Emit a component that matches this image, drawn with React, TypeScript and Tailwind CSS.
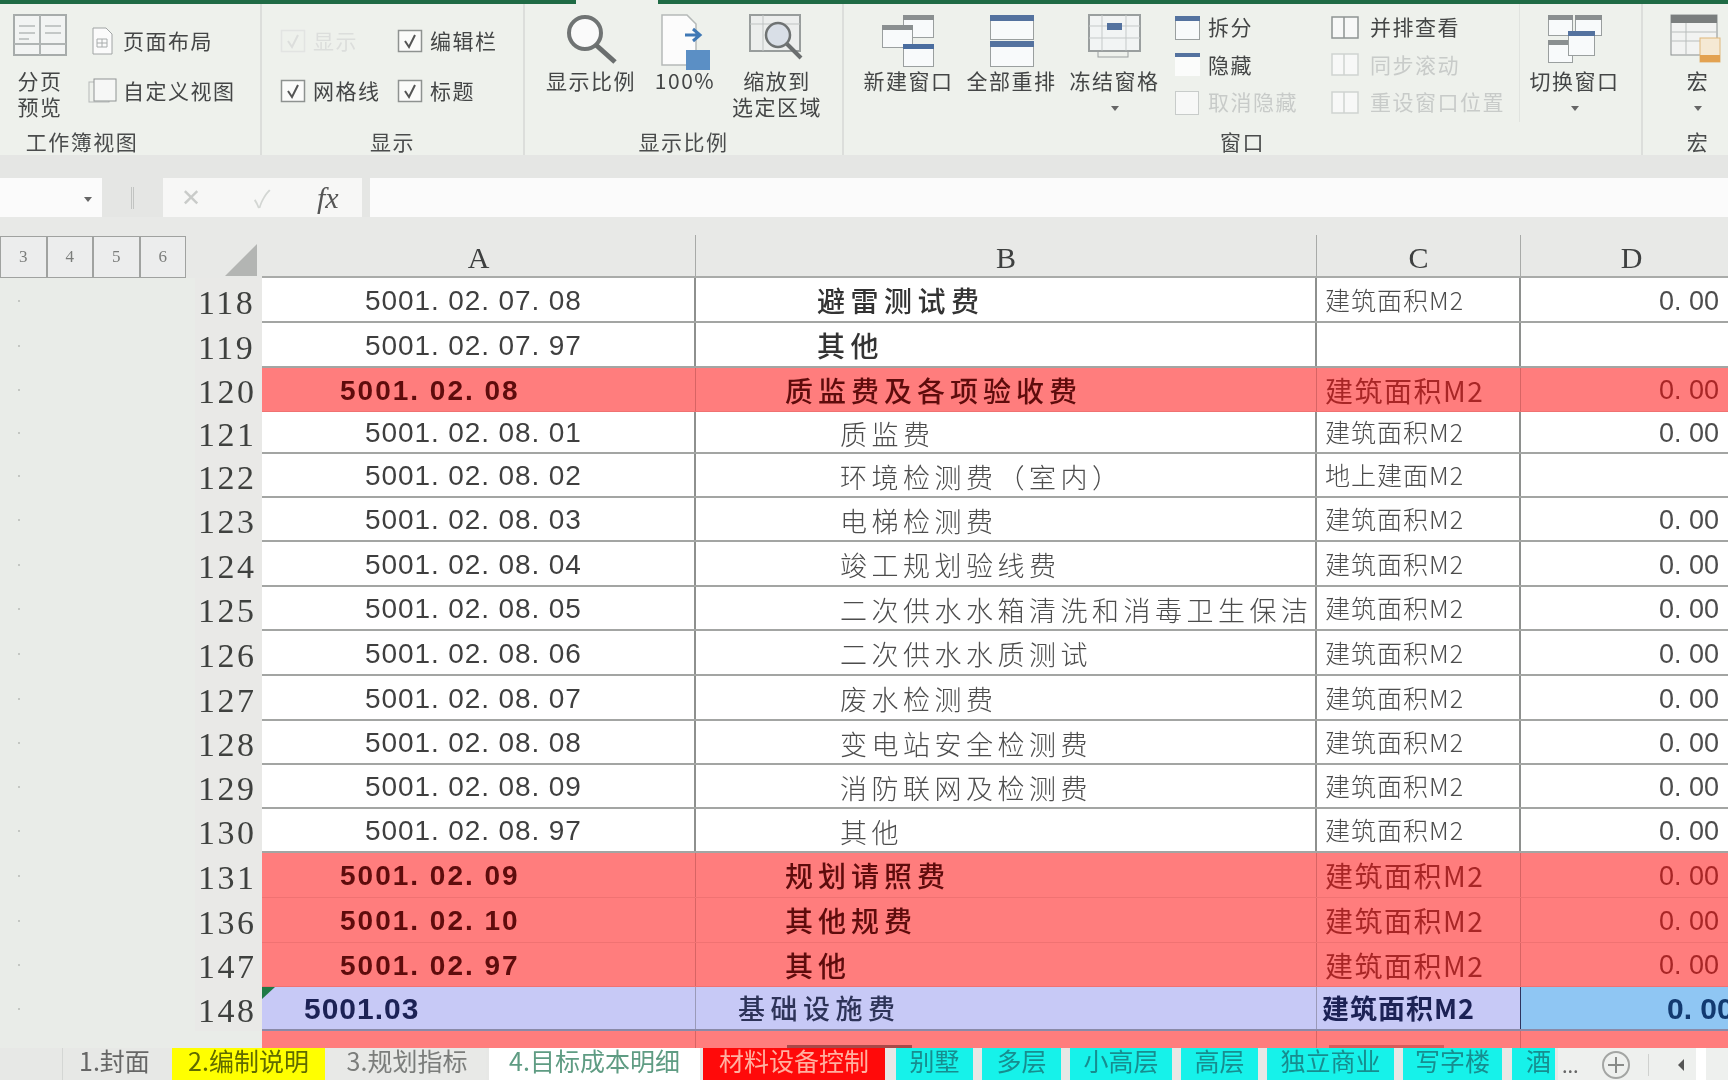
import React from "react";

const Win = ({ x, y, w, h, head = "#7f8c9c", headH = 5, fill = "#f8fafb" }: { x: number; y: number; w: number; h: number; head?: string; headH?: number; fill?: string }) => (
  <g>
    <rect x={x + 0.5} y={y + 0.5} width={w} height={h} fill={fill} stroke="#9a9f9f" />
    <rect x={x} y={y} width={w + 1} height={headH} fill={head} />
  </g>
);

const PageBreakIcon = () => (
  <svg width="54" height="42" viewBox="0 0 54 42">
    <rect x="1" y="1" width="52" height="40" fill="#f2f4f3" stroke="#a7acab" strokeWidth="2" />
    <path d="M27 1v40M1 30h52" stroke="#b0b5b4" strokeWidth="2" />
    <path d="M6 12h16M6 19h16M6 25h10M32 12h16M32 19h16" stroke="#c4c8c7" strokeWidth="2" />
  </svg>
);
const PageIcon = () => (
  <svg width="24" height="28" viewBox="0 0 24 28">
    <path d="M3 1h13l6 6v20H3z" fill="#fbfbfb" stroke="#a0a4a4" />
    <path d="M7 12h10v8H7zM12 12v8M7 16h10" fill="none" stroke="#a8acac" />
  </svg>
);
const CustomViewIcon = () => (
  <svg width="30" height="26" viewBox="0 0 30 26">
    <rect x="1" y="4" width="20" height="20" fill="none" stroke="#b5b9b8" />
    <rect x="6" y="1" width="22" height="22" fill="#f6f7f6" stroke="#8f9493" />
  </svg>
);
const Check = ({ off = false }: { off?: boolean }) => (
  <svg width="26" height="24" viewBox="0 0 26 24" className="shrink-0">
    <rect x="1.5" y="1.5" width="23" height="21" fill={off ? "none" : "#fbfbfa"} stroke={off ? "#e2e4e2" : "#8e9290"} strokeWidth="1.5" />
    <path d="M8 12l4 6 6-12" fill="none" stroke={off ? "#dcdedc" : "#555"} strokeWidth="2" />
  </svg>
);
const MagnifierIcon = () => (
  <svg width="54" height="50" viewBox="0 0 54 50">
    <circle cx="21" cy="19" r="16" fill="#fafafa" stroke="#707474" strokeWidth="4" />
    <path d="M32 31l19 17" stroke="#6a6e6e" strokeWidth="5" />
  </svg>
);
const HundredIcon = () => (
  <svg width="50" height="56" viewBox="0 0 50 56">
    <path d="M2 1h25l9 9v41H2z" fill="#fcfcfc" stroke="#b5b9b8" strokeWidth="1.5" />
    <path d="M25 21h14M33 15l7 6-7 6" fill="none" stroke="#3f78b5" strokeWidth="3" />
    <rect x="26" y="36" width="24" height="20" fill="#5b8fc5" />
  </svg>
);
const ZoomSelIcon = () => (
  <svg width="56" height="46" viewBox="0 0 56 46">
    <rect x="1" y="1" width="50" height="36" fill="#eceeed" stroke="#989d9c" strokeWidth="2" />
    <path d="M1 10h50M14 1v36" stroke="#bfc3c2" />
    <circle cx="29" cy="21" r="12" fill="#d9dfe7" stroke="#6f7373" strokeWidth="2.5" />
    <path d="M38 30l14 14" stroke="#6a6e6e" strokeWidth="4" />
  </svg>
);
const NewWinIcon = () => (
  <svg width="56" height="54" viewBox="0 0 56 54">
    <Win x={22} y={1} w={30} h={22} head="#8a8f90" />
    <Win x={1} y={11} w={30} h={22} head="#8a8f90" />
    <Win x={22} y={30} w={30} h={22} head="#4a6d9f" />
  </svg>
);
const ArrangeIcon = () => (
  <svg width="46" height="54" viewBox="0 0 46 54">
    <Win x={1} y={1} w={43} h={24} head="#54729f" headH={6} />
    <Win x={1} y={27} w={43} h={25} head="#54729f" headH={6} />
  </svg>
);
const FreezeIcon = () => (
  <svg width="54" height="44" viewBox="0 0 54 44">
    <rect x="1" y="1" width="51" height="36" fill="#f2f4f4" stroke="#9a9f9f" strokeWidth="2" />
    <path d="M1 12h51M1 24h51M14 1v36M38 1v36" stroke="#c5c9c9" />
    <rect x="19" y="9" width="15" height="7" fill="#54729f" />
    <rect x="10" y="37" width="30" height="6" fill="none" stroke="#9a9f9f" />
  </svg>
);
const SmallWin = ({ mode }: { mode: "split" | "hide" | "off" }) => (
  <svg width="27" height="26" viewBox="0 0 27 26" className="shrink-0">
    {mode === "split" && <Win x={1} y={1} w={24} h={23} head="#54729f" headH={5} />}
    {mode === "hide" && (
      <g>
        <rect x="1" y="1" width="25" height="23" fill="#fbfcfb" />
        <rect x="1" y="1" width="25" height="4" fill="#54729f" />
      </g>
    )}
    {mode === "off" && <rect x="1.5" y="1.5" width="23" height="23" fill="#f7f8f7" stroke="#c8ccca" />}
  </svg>
);
const SideBySideIcon = ({ off = false }: { off?: boolean }) => (
  <svg width="34" height="26" viewBox="0 0 34 26" className="shrink-0">
    <path d="M3 2h12v21H3zM15 2h14v21H15z" fill="#f7f8f7" stroke={off ? "#d0d3d1" : "#8f9493"} strokeWidth="1.5" />
  </svg>
);
const SwitchIcon = () => (
  <svg width="56" height="50" viewBox="0 0 56 50">
    <Win x={1} y={1} w={24} h={20} head="#8a8f90" />
    <Win x={28} y={1} w={26} h={20} head="#8a8f90" />
    <Win x={1} y={26} w={24} h={22} head="#8a8f90" />
    <Win x={21} y={17} w={26} h={24} head="#54729f" />
  </svg>
);
const MacroIcon = () => (
  <svg width="56" height="50" viewBox="0 0 56 50">
    <rect x="1" y="1" width="46" height="40" fill="#f2f3f2" stroke="#8a8f8f" />
    <rect x="1" y="1" width="46" height="8" fill="#7a7e7e" />
    <path d="M1 18h46M1 27h46M16 9v32" stroke="#b9bdbc" />
    <rect x="30" y="24" width="20" height="24" fill="#f5e9d4" stroke="#e0b77a" />
    <rect x="30" y="41" width="20" height="7" fill="#e3a251" />
  </svg>
);
const Caret = () => <div className="mt-[4px] h-0 w-0 border-x-[4px] border-t-[5px] border-x-transparent border-t-[#666]" />;

const BigBtn = ({ icon, lines, caret = false, w = "w-[89px]" }: { icon: React.ReactNode; lines: string[]; caret?: boolean; w?: string }) => (
  <div className={`flex shrink-0 flex-col items-center pt-[9px] ${w}`}>
    <div className="flex h-[54px] items-start justify-center pt-[1px]">{icon}</div>
    {lines.map((l) => (
      <div key={l} className="whitespace-nowrap text-[21px] leading-[26px] tracking-[1.5px] text-[#444646]">{l}</div>
    ))}
    {caret && (
      <div className="flex h-[26px] items-center">
        <Caret />
      </div>
    )}
  </div>
);
const Small = ({ icon, text, off = false }: { icon: React.ReactNode; text: string; off?: boolean }) => (
  <div className="flex h-[37.5px] items-center gap-[7px]">
    {icon}
    <span className={`-mt-[2px] whitespace-nowrap text-[21px] tracking-[1.5px] ${off ? "text-[#c8cbc9]" : "text-[#444646]"}`}>{text}</span>
  </div>
);
const Label = ({ children, extra = "" }: { children: string; extra?: string }) => (
  <div className={`mb-[1px] h-[26px] text-center text-[21px] leading-[26px] tracking-[1.5px] text-[#4a4c4c] ${extra}`}>{children}</div>
);

const CheckItem = ({ text, off = false }: { text: string; off?: boolean }) => (
  <div className="flex h-[50px] items-center gap-[7px]">
    <Check off={off} />
    <span className={`whitespace-nowrap text-[21px] tracking-[1.5px] ${off ? "text-[#dcdedc]" : "text-[#444646]"}`}>{text}</span>
  </div>
);

const Ribbon = () => (
  <div className="flex h-[151px] shrink-0 bg-[#eef1ec]">
    <div className="flex w-[262px] shrink-0 flex-col justify-between border-r-2 border-[#dcdedb]">
      <div className="flex">
        <BigBtn w="w-[80px]" lines={["分页", "预览"]} icon={<PageBreakIcon />} />
        <div className="flex flex-col pl-[8px] pt-[12px]">
          <div className="flex h-[50px] items-center gap-[9px] pl-[2px]">
            <PageIcon />
            <span className="text-[21px] tracking-[1.5px] text-[#444646]">页面布局</span>
          </div>
          <div className="flex h-[50px] items-center gap-[5px]">
            <CustomViewIcon />
            <span className="whitespace-nowrap text-[21px] tracking-[1.5px] text-[#444646]">自定义视图</span>
          </div>
        </div>
      </div>
      <Label extra="pr-[96px]">工作簿视图</Label>
    </div>
    <div className="flex w-[263px] shrink-0 flex-col justify-between border-r-2 border-[#dcdedb]">
      <div className="grid grid-cols-[117px_1fr] pl-[18px] pt-[12px]">
        <CheckItem off text="显示" />
        <CheckItem text="编辑栏" />
        <CheckItem text="网格线" />
        <CheckItem text="标题" />
      </div>
      <Label>显示</Label>
    </div>
    <div className="flex w-[319px] shrink-0 flex-col justify-between border-r-2 border-[#dcdedb]">
      <div className="flex pl-[20px]">
        <BigBtn w="w-[92px]" lines={["显示比例"]} icon={<MagnifierIcon />} />
        <BigBtn w="w-[96px]" lines={["100%"]} icon={<HundredIcon />} />
        <BigBtn w="w-[88px]" lines={["缩放到", "选定区域"]} icon={<ZoomSelIcon />} />
      </div>
      <Label>显示比例</Label>
    </div>
    <div className="flex w-[799px] shrink-0 flex-col justify-between border-r-2 border-[#dcdedb]">
      <div className="flex pl-[20px]">
        <div className="flex gap-[14px]">
          <BigBtn lines={["新建窗口"]} icon={<NewWinIcon />} />
          <BigBtn lines={["全部重排"]} icon={<ArrangeIcon />} />
          <BigBtn lines={["冻结窗格"]} icon={<FreezeIcon />} caret />
        </div>
        <div className="ml-[15px] flex w-[155px] flex-col pt-[5px]">
          <Small icon={<SmallWin mode="split" />} text="拆分" />
          <Small icon={<SmallWin mode="hide" />} text="隐藏" />
          <Small off icon={<SmallWin mode="off" />} text="取消隐藏" />
        </div>
        <div className="flex w-[190px] flex-col pt-[5px]">
          <Small icon={<SideBySideIcon />} text="并排查看" />
          <Small off icon={<SideBySideIcon off />} text="同步滚动" />
          <Small off icon={<SideBySideIcon off />} text="重设窗口位置" />
        </div>
        <div className="border-l border-[#e0e3df] pl-[10px]">
          <BigBtn lines={["切换窗口"]} icon={<SwitchIcon />} caret />
        </div>
      </div>
      <Label>窗口</Label>
    </div>
    <div className="flex w-[110px] shrink-0 flex-col justify-between pl-[25px]">
      <BigBtn w="w-[60px]" lines={["宏"]} icon={<MacroIcon />} caret />
      <Label extra="w-[60px]">宏</Label>
    </div>
  </div>
);

const FormulaBar = () => (
  <div className="flex h-[62px] shrink-0 flex-col bg-[#e5e6e4] pt-[23px]">
    <div className="flex h-[39px] items-stretch">
      <div className="flex w-[102px] items-center justify-end bg-[#fbfbfb] pr-[10px]">
        <Caret />
      </div>
      <div className="flex w-[61px] items-center justify-center">
        <div className="h-[22px] w-[3px] border-x border-[#c2c4c2]" />
      </div>
      <div className="flex w-[199px] items-center bg-[#f7f7f6] text-[24px]">
        <span className="w-[67px] pl-[18px] font-['Liberation_Serif',serif] text-[#c9cbc9]">✕</span>
        <span className="w-[87px] pl-[24px] text-[#d3d6d3]">✓</span>
        <span className="font-['Liberation_Serif',serif] text-[30px] italic text-[#555]">fx</span>
      </div>
      <div className="ml-[8px] flex-1 bg-[#fbfbfb]" />
    </div>
  </div>
);

const ColHead = ({ children, w }: { children: string; w: string }) => (
  <div className={`flex items-center justify-center border-r border-[#a8aaa8] pt-[3px] font-['Liberation_Serif',serif] text-[30px] text-[#3e4040] ${w}`}>{children}</div>
);

const HeaderRow = () => (
  <div className="flex h-[61px] shrink-0 bg-[#e8e9e7]">
    <div className="flex w-[262px] shrink-0 items-end">
      <div className="flex h-[42px] w-[186px] border-y border-[#a0a2a0] bg-[#eceded]">
        {["3", "4", "5", "6"].map((n) => (
          <div key={n} className="flex flex-1 items-center justify-center border-x border-[#a0a2a0] font-['Liberation_Serif',serif] text-[17px] text-[#7b7d7b]">{n}</div>
        ))}
      </div>
      <svg width="32" height="32" viewBox="0 0 32 32" className="mb-[2px] ml-[39px] mr-[5px] shrink-0">
        <path d="M32 0v32H0z" fill="#b3b5b3" />
      </svg>
    </div>
    <div className="flex flex-1 border-b-2 border-[#a9aba9] pt-[18px]">
      <ColHead w="w-[434px]">A</ColHead>
      <ColHead w="w-[621px]">B</ColHead>
      <ColHead w="w-[204px]">C</ColHead>
      <div className="flex flex-1 items-center justify-center pl-[14px] pt-[3px] font-['Liberation_Serif',serif] text-[30px] text-[#3e4040]">D</div>
    </div>
  </div>
);

type Row = { n: string; a: string; b: string; c: string; d: string; h: string; kind: "sub" | "mid" | "red" | "blue" };
const rows: Row[] = [
  { n: "118", a: "5001. 02. 07. 08", b: "避雷测试费", c: "建筑面积M2", d: "0. 00", h: "h-[45px]", kind: "mid" },
  { n: "119", a: "5001. 02. 07. 97", b: "其他", c: "", d: "", h: "h-[45px]", kind: "mid" },
  { n: "120", a: "5001. 02. 08", b: "质监费及各项验收费", c: "建筑面积M2", d: "0. 00", h: "h-[44px]", kind: "red" },
  { n: "121", a: "5001. 02. 08. 01", b: "质监费", c: "建筑面积M2", d: "0. 00", h: "h-[42px]", kind: "sub" },
  { n: "122", a: "5001. 02. 08. 02", b: "环境检测费（室内）", c: "地上建面M2", d: "", h: "h-[44px]", kind: "sub" },
  { n: "123", a: "5001. 02. 08. 03", b: "电梯检测费", c: "建筑面积M2", d: "0. 00", h: "h-[44px]", kind: "sub" },
  { n: "124", a: "5001. 02. 08. 04", b: "竣工规划验线费", c: "建筑面积M2", d: "0. 00", h: "h-[45px]", kind: "sub" },
  { n: "125", a: "5001. 02. 08. 05", b: "二次供水水箱清洗和消毒卫生保洁", c: "建筑面积M2", d: "0. 00", h: "h-[44px]", kind: "sub" },
  { n: "126", a: "5001. 02. 08. 06", b: "二次供水水质测试", c: "建筑面积M2", d: "0. 00", h: "h-[45px]", kind: "sub" },
  { n: "127", a: "5001. 02. 08. 07", b: "废水检测费", c: "建筑面积M2", d: "0. 00", h: "h-[45px]", kind: "sub" },
  { n: "128", a: "5001. 02. 08. 08", b: "变电站安全检测费", c: "建筑面积M2", d: "0. 00", h: "h-[44px]", kind: "sub" },
  { n: "129", a: "5001. 02. 08. 09", b: "消防联网及检测费", c: "建筑面积M2", d: "0. 00", h: "h-[44px]", kind: "sub" },
  { n: "130", a: "5001. 02. 08. 97", b: "其他", c: "建筑面积M2", d: "0. 00", h: "h-[44px]", kind: "sub" },
  { n: "131", a: "5001. 02. 09", b: "规划请照费", c: "建筑面积M2", d: "0. 00", h: "h-[45px]", kind: "red" },
  { n: "136", a: "5001. 02. 10", b: "其他规费", c: "建筑面积M2", d: "0. 00", h: "h-[45px]", kind: "red" },
  { n: "147", a: "5001. 02. 97", b: "其他", c: "建筑面积M2", d: "0. 00", h: "h-[44px]", kind: "red" },
  { n: "148", a: "5001.03", b: "基础设施费", c: "建筑面积M2", d: "0. 00", h: "h-[44px]", kind: "blue" },
];

const Gutter = ({ n, h }: { n: string; h: string }) => (
  <div className={`flex w-[262px] shrink-0 ${h}`}>
    <div className="flex w-[195px] items-center bg-[#e9ece8] pl-[18px]">
      <div className="h-[2px] w-[2px] bg-[#c4c7c3]" />
    </div>
    <div className="flex w-[67px] items-center justify-start overflow-hidden bg-[#e9e9e7] pl-[3px] pt-[3px] font-['Liberation_Serif',serif] text-[34px] tracking-[2.5px] text-[#3f413f]">{n}</div>
  </div>
);

const DataRow = ({ r }: { r: Row }) => {
  if (r.kind === "blue") {
    return (
      <div className={`flex ${r.h}`}>
        <Gutter n={r.n} h={r.h} />
        <div className="relative flex flex-1 border-b-2 border-[#8a8aa8] bg-[#c7c9f6] text-[#1c2255]">
          <div className="flex w-[434px] items-center border-r border-[#9a9ab8] pl-[42px] font-['Liberation_Sans',sans-serif] text-[30px] font-bold tracking-[1px]">{r.a}</div>
          <div className="flex w-[621px] items-center border-r border-[#9a9ab8] pl-[42px] text-[27px] font-medium tracking-[5.5px] text-[#2d3358]">{r.b}</div>
          <div className="flex w-[204px] items-center border-r border-[#30345e] pl-[5px] text-[27px] font-bold tracking-[1px] whitespace-nowrap">{r.c}</div>
          <div className="flex flex-1 items-center overflow-hidden bg-[#8fc6f3] pl-[146px] font-['Liberation_Sans',sans-serif] text-[30px] font-bold whitespace-pre text-[#123a70]">{r.d}</div>
          <svg width="14" height="12" viewBox="0 0 14 12" className="absolute left-0 top-0">
            <path d="M0 0h13L0 12z" fill="#1f7a46" />
          </svg>
        </div>
      </div>
    );
  }
  if (r.kind === "red") {
    return (
      <div className={`flex ${r.h}`}>
        <Gutter n={r.n} h={r.h} />
        <div className="flex flex-1 border-b border-[#f07272] bg-[#ff7d7d] text-[#5e0c0c]">
          <div className="flex w-[434px] items-center border-r border-[#d86464] pl-[78px] pt-[2px] font-['Liberation_Sans',sans-serif] text-[28px] font-bold tracking-[2px] whitespace-pre">{r.a}</div>
          <div className="flex w-[621px] items-center border-r border-[#d86464] pl-[89px] text-[28px] font-medium tracking-[5px] whitespace-nowrap">{r.b}</div>
          <div className="flex w-[204px] items-center border-r border-[#d86464] pl-[8px] text-[28px] tracking-[1.5px] whitespace-nowrap text-[#a82626]">{r.c}</div>
          <div className="flex flex-1 items-center justify-end pr-[9px] pt-[2px] font-['Liberation_Sans',sans-serif] text-[27px] whitespace-pre text-[#a82626]">{r.d}</div>
        </div>
      </div>
    );
  }
  const pl = r.kind === "mid" ? "pl-[121px] font-medium text-[#333] text-[28px] tracking-[5.5px]" : "pl-[144px] pt-[4px] font-light text-[#4c4c4c] text-[27px] tracking-[4.5px]";
  return (
    <div className={`flex ${r.h}`}>
      <Gutter n={r.n} h={r.h} />
      <div className="flex flex-1 border-b-2 border-[#a3a5a3] bg-white">
        <div className="flex w-[434px] items-center border-r-2 border-[#8e908e] pl-[103px] pt-[2px] font-['Liberation_Sans',sans-serif] text-[28px] tracking-[0.9px] whitespace-pre text-[#3f3f3f]">{r.a}</div>
        <div className={`flex w-[621px] items-center overflow-hidden border-r-2 border-[#8e908e] whitespace-nowrap ${pl}`}>{r.b}</div>
        <div className="flex w-[204px] items-center border-r-2 border-[#8e908e] pl-[8px] text-[25px] font-light tracking-[1px] whitespace-nowrap text-[#4c4c4c]">{r.c}</div>
        <div className="flex flex-1 items-center justify-end pr-[9px] pt-[3px] font-['Liberation_Sans',sans-serif] text-[27px] whitespace-pre text-[#4c4c4c]">{r.d}</div>
      </div>
    </div>
  );
};

const tabs = [
  { t: "别墅", w: "w-[77px]" },
  { t: "多层", w: "w-[79px]" },
  { t: "小高层", w: "w-[102px]" },
  { t: "高层", w: "w-[77px]" },
  { t: "独立商业", w: "w-[127px]" },
  { t: "写字楼", w: "w-[99px]" },
];

const TabBar = () => (
  <div className="flex h-[33px] shrink-0 items-stretch gap-[3px] bg-[#e7e8e6] text-[25px] leading-[24px] whitespace-nowrap">
    <div className="ml-[62px] w-[107px] border-l border-[#d4d6d4] pl-[16px] text-[#666]">1.封面</div>
    <div className="w-[153px] bg-[#ffff00] text-center text-[#5f6a00]">2.编制说明</div>
    <div className="w-[158px] bg-[#e8e9e7] text-center text-[#7b7d7b]">3.规划指标</div>
    <div className="w-[211px] bg-white text-center text-[#5f9c83]">4.目标成本明细</div>
    <div className="w-[182px] bg-[#ff0a0a] text-center text-[#ffb0a0]">材料设备控制</div>
    <div className="w-[5px]" />
    {tabs.map((t) => (
      <div key={t.t} className={`${t.w} mr-[6px] bg-[#16f2ea] text-center text-[#178d8f]`}>{t.t}</div>
    ))}
    <div className="ml-[1px] w-[43px] overflow-hidden bg-[#16f2ea] pl-[14px] text-[#178d8f]">酒</div>
    <div className="flex flex-1 items-center bg-[#eef0ee] pl-[4px] text-[#666]">
      <span className="w-[38px] text-[20px]">...</span>
      <svg width="32" height="30" viewBox="0 0 32 30" className="shrink-0">
        <circle cx="16" cy="15" r="13" fill="none" stroke="#a3a5a3" strokeWidth="2" />
        <path d="M16 7v16M8 15h16" stroke="#888a88" strokeWidth="2" />
      </svg>
      <div className="ml-[16px] h-[22px] w-[1px] bg-[#cfd1cf]" />
      <div className="ml-[29px] h-0 w-0 border-y-[6px] border-r-[6px] border-y-transparent border-r-[#555]" />
      <div className="ml-[12px] h-full w-[10px] bg-white" />
    </div>
  </div>
);

const PartialRow = () => (
  <div className="flex h-[17px] shrink-0">
    <div className="w-[262px] bg-[#e9ece8]" />
    <div className="flex flex-1 items-end bg-[#ff7d7d]">
      <div className="h-[17px] w-[434px] border-r border-[#d86464]" />
      <div className="flex h-[17px] w-[621px] items-end border-r border-[#d86464] pl-[91px]">
        <div className="h-[3px] w-[125px] bg-[#a84848]" />
      </div>
      <div className="flex h-[17px] w-[204px] items-end border-r border-[#d86464] pl-[12px]">
        <div className="h-[3px] w-[115px] bg-[#d85a5a]" />
      </div>
    </div>
  </div>
);

export default function App() {
  return (
    <div className="flex h-[1080px] w-[1728px] flex-col overflow-hidden bg-[#e9ece8] font-['Noto_Sans_CJK_SC','Liberation_Sans',sans-serif] blur-[0.6px]">
      <div className="flex h-[4px] shrink-0">
        <div className="w-[576px] bg-[#1f6b45]" />
        <div className="w-[82px] bg-[#eef1ec]" />
        <div className="flex-1 bg-[#1f6b45]" />
      </div>
      <Ribbon />
      <FormulaBar />
      <HeaderRow />
      {rows.map((r) => (
        <DataRow key={r.n} r={r} />
      ))}
      <PartialRow />
      <TabBar />
    </div>
  );
}
